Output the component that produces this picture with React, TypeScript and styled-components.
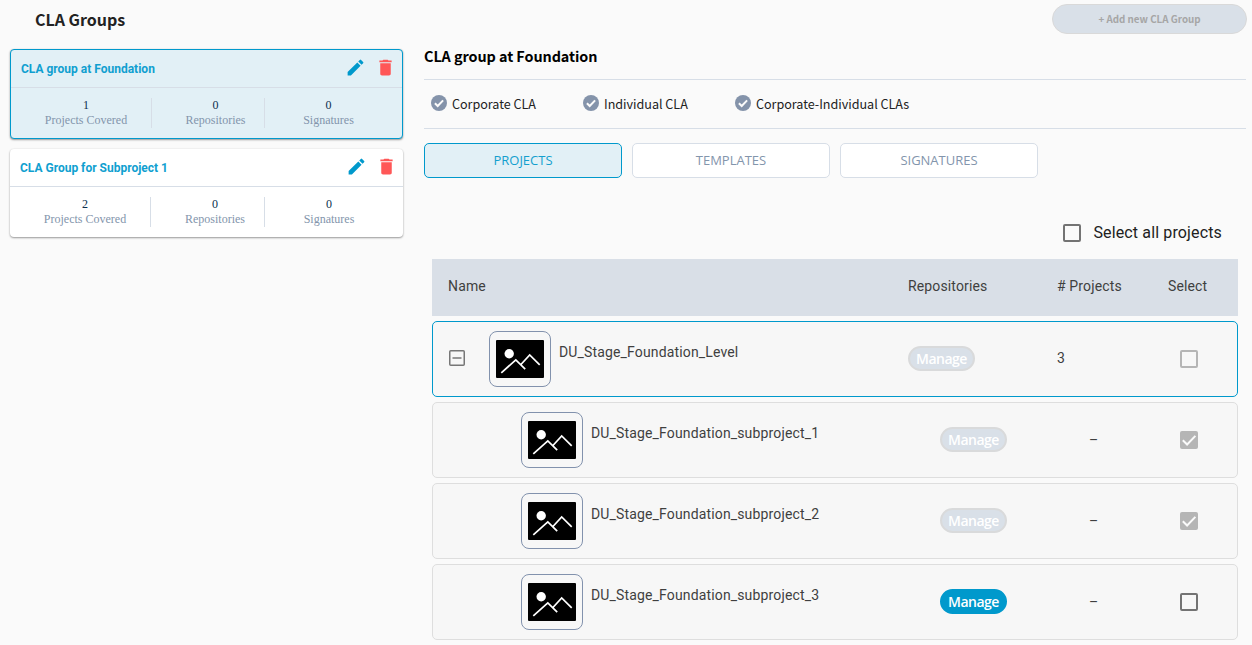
import React from "react";
import styled, { createGlobalStyle } from "styled-components";

const blue = "#0099cc";
const slate = "#8395ac";
const line = "#d7dee7";
const heading = `"Noto Sans CJK SC", sans-serif`;
const roboto = `Roboto, sans-serif`;
const open = `"Open Sans", sans-serif`;

const GlobalStyle = createGlobalStyle`
  * { box-sizing: border-box; }
  body { margin: 0; background: #fafafa; font-family: ${roboto}; overflow: hidden; }
`;

const Page = styled.div`
  display: flex;
  width: 1252px;
  height: 645px;
  overflow: hidden;
`;

const Sidebar = styled.aside`
  width: 394px;
  margin-left: 10px;
  flex: none;
`;

const PageTitle = styled.h1`
  margin: 0;
  padding-left: 25px;
  height: 49px;
  font: 700 16px/38px ${heading};
  color: #222;
`;

const Card = styled.article<{ $active?: boolean }>`
  height: ${(p) => (p.$active ? 90 : 88)}px;
  width: 393px;
  margin-bottom: 10px;
  border: ${(p) => (p.$active ? `1px solid ${blue}` : "0")};
  border-radius: 4px;
  background: ${(p) => (p.$active ? "#e2f0f6" : "#fff")};
  box-shadow: 0 1px 2px rgba(0, 0, 0, 0.38), 0 0 2px rgba(0, 0, 0, 0.08);
`;

const CardHead = styled.header`
  display: flex;
  align-items: center;
  height: 38px;
  padding: 0 6px 0 10px;
  border-bottom: 1px solid ${line};
`;

const CardName = styled.h2`
  flex: 1;
  margin: 0;
  font: 700 12px/16px ${roboto};
  color: #109fd0;
`;

const IconRow = styled.div`
  display: flex;
  gap: 9px;
  margin-top: -3px;
  svg { display: block; }
`;

const Stats = styled.div<{ $active?: boolean }>`
  display: grid;
  grid-template-columns: 131px repeat(2, ${(p) => (p.$active ? 98 : 99)}px);
  column-gap: 15px;
  padding: 10px 0 0 10px;
`;

const Stat = styled.div`
  height: 30px;
  border-right: 1px solid ${line};
  text-align: center;
  font: 12px/15px "Liberation Serif", serif;
  color: ${slate};
  &:last-child { border-color: transparent; }
`;

const Count = styled.div`
  color: #0b2f4e;
`;

const Main = styled.main`
  width: 822px;
  margin-left: 20px;
`;

const TopBar = styled.div`
  display: flex;
  justify-content: flex-end;
  padding-top: 4px;
  height: 34px;
  margin-right: -1px;
`;

const AddButton = styled.button`
  width: 195px;
  height: 30px;
  padding: 0;
  border: 1px solid #d9d9d9;
  border-radius: 15px;
  background: #d9e0e8;
  color: #a6a6a6;
  font: 700 9.8px/28px ${heading};
`;

const GroupTitle = styled.h2`
  margin: 0;
  height: 45px;
  font: 700 14.4px/43px ${heading};
  letter-spacing: -0.06px;
  color: #000;
`;

const Kinds = styled.div`
  display: flex;
  align-items: center;
  height: 50px;
  padding-left: 7px;
  border: 1px solid ${line};
  border-width: 1px 0;
`;

const Kind = styled.div`
  display: flex;
  align-items: center;
  gap: 5px;
  width: 152px;
  white-space: nowrap;
  font: 12.6px/20px ${heading};
  letter-spacing: -0.03px;
  color: #222;
  svg { flex: none; margin-top: -2px; }
`;

const Tabs = styled.nav`
  display: flex;
  gap: 10px;
  margin-top: 14px;
`;

const Tab = styled.button<{ $active?: boolean }>`
  width: 198px;
  height: 35px;
  padding: 0;
  border: 1px solid ${(p) => (p.$active ? blue : line)};
  border-radius: 5px;
  background: ${(p) => (p.$active ? "#e2f0f6" : "#fff")};
  color: ${(p) => (p.$active ? "#149fce" : slate)};
  font: 13px/33px ${open};
`;

const SelectAll = styled.label`
  display: flex;
  align-items: center;
  justify-content: flex-end;
  gap: 12px;
  height: 20px;
  margin: 45px 24px 16px 0;
  font-size: 16px;
  letter-spacing: 0.14px;
  color: #212121;
`;

const SelectAllText = styled.span`
  padding-bottom: 2px;
`;

const Box = styled.span<{ $checked?: boolean; $disabled?: boolean }>`
  display: inline-block;
  width: 18px;
  height: 18px;
  border: ${(p) => (p.$checked ? "0" : "2px solid")};
  border-color: ${(p) => (p.$disabled ? "#b5b5b5" : "#737373")};
  border-radius: 2px;
  background: ${(p) => (p.$checked ? "#b5b5b5" : "transparent")};
  svg { display: block; }
`;

const Table = styled.section`
  margin: 0 8px;
  display: flex;
  flex-direction: column;
  gap: 5px;
  font-size: 14px;
  color: #3f3f3f;
`;

const HeadRow = styled.div`
  display: grid;
  grid-template-columns: 460px 149px 111px 1fr;
  align-items: center;
  height: 57px;
  padding: 0 0 3px 16px;
  background: #d9dfe7;
  letter-spacing: 0.14px;
`;

const Row = styled.div<{ $root?: boolean }>`
  display: grid;
  grid-template-columns: 460px 149px 111px 1fr;
  align-items: center;
  height: 76px;
  padding-left: 15px;
  border: 1px solid ${(p) => (p.$root ? blue : "#dedede")};
  border-radius: 5px;
  background: #f7f7f7;
`;

const NameCell = styled.div<{ $child?: boolean }>`
  display: flex;
  align-items: center;
  padding-left: ${(p) => (p.$child ? 73 : 1)}px;
`;

const Toggle = styled.span`
  display: flex;
  width: 40px;
  padding-bottom: 2px;
`;

const Thumb = styled.span`
  display: flex;
  align-items: center;
  justify-content: center;
  width: 62px;
  height: 56px;
  margin-right: 8px;
  border: 1px solid #8292ad;
  border-radius: 8px;
`;

const ProjectName = styled.span`
  margin-top: -14px;
  letter-spacing: 0.15px;
`;

const Cell = styled.div<{ $indent?: number; $raise?: number }>`
  display: flex;
  align-items: center;
  padding-left: ${(p) => p.$indent ?? 0}px;
  padding-bottom: ${(p) => p.$raise ?? 0}px;
`;

const Manage = styled.button<{ $disabled?: boolean }>`
  width: 67px;
  height: 25px;
  padding: 0;
  border: 2px solid ${(p) => (p.$disabled ? "#d9dadb" : blue)};
  border-radius: 13px;
  background: ${(p) => (p.$disabled ? "#d9e0e8" : blue)};
  color: #fff;
  font: 600 14px/21px ${open};
  letter-spacing: -0.5px;
`;

const Pencil = () => (
  <svg width="21" height="21" viewBox="0 0 24 24" fill={blue}>
    <path d="M3 17.25V21h3.75L17.81 9.94l-3.75-3.75L3 17.25zM20.71 7.04a1 1 0 0 0 0-1.41l-2.34-2.34a1 1 0 0 0-1.41 0l-1.83 1.83 3.75 3.75 1.83-1.83z" />
  </svg>
);

const Trash = () => (
  <svg width="21" height="21" viewBox="0 0 24 24" fill="#ff5757">
    <path d="M6 19c0 1.1.9 2 2 2h8c1.1 0 2-.9 2-2V7H6v12zM19 4h-3.5l-1-1h-5l-1 1H5v2h14V4z" />
  </svg>
);

const CheckCircle = () => (
  <svg width="16" height="16" viewBox="0 0 16 16">
    <circle cx="8" cy="8" r="8" fill="#8493aa" />
    <path d="M3.9 8.3l2.8 2.7 5.4-5.6" fill="none" stroke="#fafafa" strokeWidth="2" />
  </svg>
);

const Picture = () => (
  <svg width="48" height="38" viewBox="0 0 48 38">
    <rect width="48" height="38" rx="1" fill="#000" />
    <circle cx="13.2" cy="13.8" r="4.7" fill="#fff" />
    <path d="M5.3 32.8L19.8 19.8l9.4 9.3M24.7 24.8l9-9.8 10 9.8" fill="none" stroke="#fff" strokeWidth="1.7" />
  </svg>
);

const Collapse = () => (
  <svg width="16" height="16" viewBox="0 0 16 16" fill="none" stroke="#777" strokeWidth="1.5">
    <rect x=".75" y=".75" width="14.5" height="14.5" rx="1" />
    <path d="M3.5 8h9" />
  </svg>
);

const Checkbox = ({ checked, disabled }: { checked?: boolean; disabled?: boolean }) => (
  <Box $checked={checked} $disabled={disabled}>
    {checked && (
      <svg width="18" height="18" viewBox="0 0 18 18">
        <path d="M2.8 9.2l4.3 4.3 8.3-8.6" fill="none" stroke="#fafafa" strokeWidth="2" />
      </svg>
    )}
  </Box>
);

const groups = [
  { name: "CLA group at Foundation", covered: 1, active: true },
  { name: "CLA Group for Subproject 1", covered: 2, active: false },
];

const projects = [
  { name: "DU_Stage_Foundation_Level", root: true, count: "3", checked: false, disabled: true, locked: true },
  { name: "DU_Stage_Foundation_subproject_1", root: false, count: "–", checked: true, disabled: true, locked: true },
  { name: "DU_Stage_Foundation_subproject_2", root: false, count: "–", checked: true, disabled: true, locked: true },
  { name: "DU_Stage_Foundation_subproject_3", root: false, count: "–", checked: false, disabled: false, locked: false },
];

export default function App() {
  return (
    <Page>
      <GlobalStyle />
      <Sidebar>
        <PageTitle>CLA Groups</PageTitle>
        {groups.map((g) => (
          <Card key={g.name} $active={g.active}>
            <CardHead>
              <CardName>{g.name}</CardName>
              <IconRow>
                <Pencil />
                <Trash />
              </IconRow>
            </CardHead>
            <Stats $active={g.active}>
              <Stat><Count>{g.covered}</Count>Projects Covered</Stat>
              <Stat><Count>0</Count>Repositories</Stat>
              <Stat><Count>0</Count>Signatures</Stat>
            </Stats>
          </Card>
        ))}
      </Sidebar>
      <Main>
        <TopBar>
          <AddButton>+ Add new CLA Group</AddButton>
        </TopBar>
        <GroupTitle>CLA group at Foundation</GroupTitle>
        <Kinds>
          <Kind><CheckCircle />Corporate CLA</Kind>
          <Kind><CheckCircle />Individual CLA</Kind>
          <Kind><CheckCircle />Corporate-Individual CLAs</Kind>
        </Kinds>
        <Tabs>
          <Tab $active>PROJECTS</Tab>
          <Tab>TEMPLATES</Tab>
          <Tab>SIGNATURES</Tab>
        </Tabs>
        <SelectAll>
          <Checkbox />
          <SelectAllText>Select all projects</SelectAllText>
        </SelectAll>
        <Table>
          <HeadRow>
            <span>Name</span>
            <span>Repositories</span>
            <span># Projects</span>
            <span>Select</span>
          </HeadRow>
          {projects.map((p) => (
            <Row key={p.name} $root={p.root}>
              <NameCell $child={!p.root}>
                {p.root && <Toggle><Collapse /></Toggle>}
                <Thumb><Picture /></Thumb>
                <ProjectName>{p.name}</ProjectName>
              </NameCell>
              <Cell $indent={p.root ? 0 : 32} $raise={2}>
                <Manage $disabled={p.locked}>Manage</Manage>
              </Cell>
              <Cell $indent={p.root ? 0 : 32} $raise={p.root ? 2 : 0}>{p.count}</Cell>
              <Cell $indent={12}>
                <Checkbox checked={p.checked} disabled={p.disabled} />
              </Cell>
            </Row>
          ))}
        </Table>
      </Main>
    </Page>
  );
}
